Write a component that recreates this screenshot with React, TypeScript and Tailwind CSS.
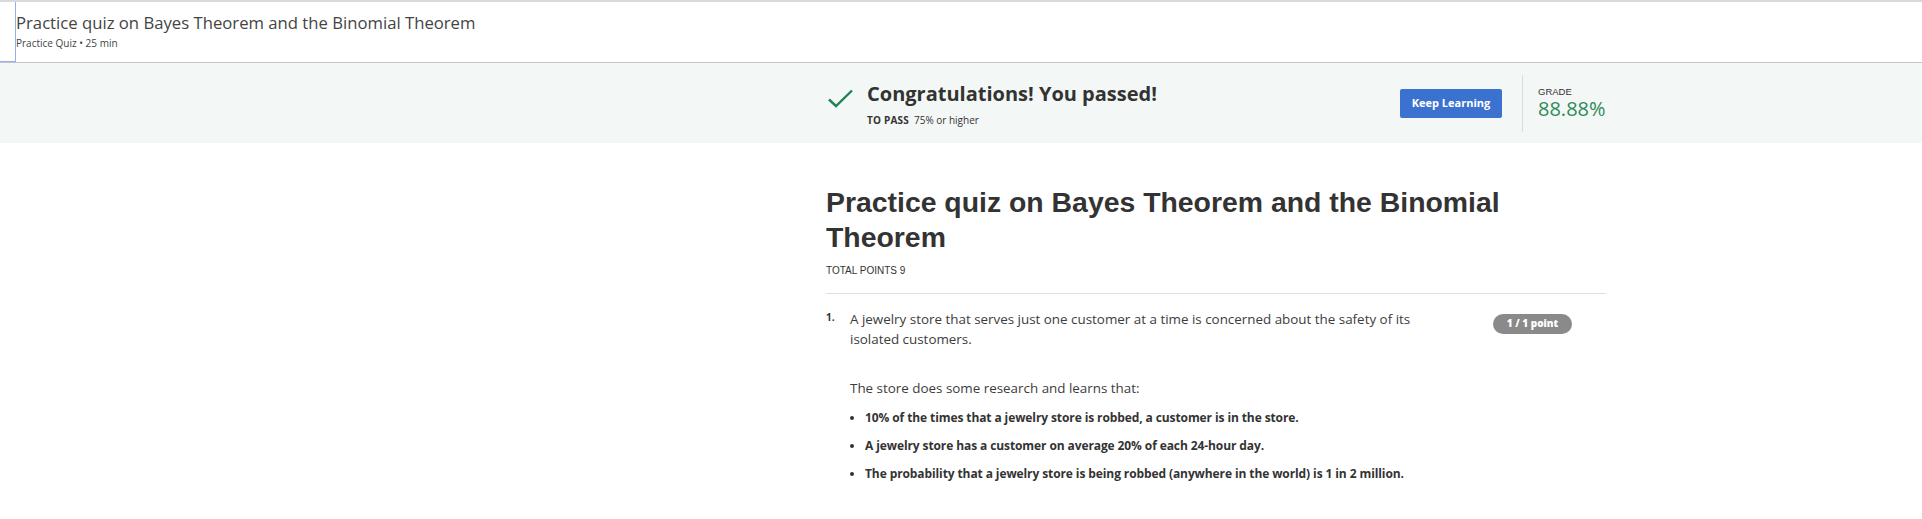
import React from "react";

const bullets = [
    "10% of the times that a jewelry store is robbed, a customer is in the store.",
    "A jewelry store has a customer on average 20% of each 24-hour day.",
    "The probability that a jewelry store is being robbed (anywhere in the world) is 1 in 2 million.",
];

const CheckIcon: React.FC = () => (
    <svg width="28" height="24" viewBox="0 0 28 24" className="shrink-0 mt-[5px]">
        <path d="M3 14.5 L10 21 L26 5.5" fill="none" stroke="#1f8354" strokeWidth="2.4" />
    </svg>
);

export default function App() {
    return (
        <div className="min-h-[519px] bg-white text-[#333] font-['Open_Sans',sans-serif]">
            {/* Top header */}
            <div className="flex h-[63px] border-t-2 border-b border-t-[#d9d9d9] border-b-[#c4c4c4]">
                <div className="w-[16px] shrink-0 border-r border-b border-[#8fb3ef]" />
                <div className="pt-[10px]">
                    <div className="text-[16.7px] leading-[22px] text-[#444]">
                        Practice quiz on Bayes Theorem and the Binomial Theorem
                    </div>
                    <div className="mt-[3px] text-[10px] leading-[13px] text-[#444]">Practice Quiz • 25 min</div>
                </div>
            </div>

            {/* Result banner */}
            <div className="h-[80px] bg-[#f3f8f6] flex">
                <div className="ml-[826px] w-[780px] flex items-center">
                    <div className="flex items-start">
                        <CheckIcon />
                        <div className="ml-[13px]">
                            <div className="text-[20px] leading-[28px] font-bold text-[#333]">
                                Congratulations! You passed!
                            </div>
                            <div className="mt-[5px] text-[10px] leading-[14px] text-[#333]">
                                <span className="font-bold tracking-[0.2px]">TO PASS</span>
                                <span className="ml-[5px]">75% or higher</span>
                            </div>
                        </div>
                    </div>
                    <div className="ml-auto flex items-center">
                        <button className="w-[102px] h-[29px] rounded-[2px] bg-[#3c72cf] text-white text-[11px] font-bold">
                            Keep Learning
                        </button>
                        <div className="ml-[20px] w-px h-[57px] bg-[#dcdcdc]" />
                        <div className="ml-[15px] w-[68px] font-['Liberation_Sans',Arial,sans-serif]">
                            <div className="text-[9.5px] leading-[12px] text-[#333]">GRADE</div>
                            <div className="text-[20px] leading-[22px] text-[#2f8a5a] font-['Open_Sans',sans-serif]">88.88%</div>
                        </div>
                    </div>
                </div>
            </div>

            {/* Quiz body */}
            <div className="flex">
                <div className="ml-[826px] w-[780px] pt-[42px]">
                    <h1 className="text-[28.4px] leading-[35px] font-bold text-[#333] font-['Liberation_Sans',Arial,sans-serif]">
                        Practice quiz on Bayes Theorem and the Binomial Theorem
                    </h1>
                    <div className="mt-[9px] text-[10px] leading-[14px] text-[#333] font-['Liberation_Sans',Arial,sans-serif]">
                        TOTAL POINTS 9
                    </div>
                    <div className="mt-[15px] border-t border-[#e0e0e0]" />

                    <div className="flex pt-[15px]">
                        <div className="w-[24px] shrink-0 text-[10px] leading-[16px] font-bold">1.</div>
                        <div className="w-[590px] text-[13.4px] leading-[20px] text-[#3c3c3c]">
                            <p>A jewelry store that serves just one customer at a time is concerned about the safety of its isolated customers.</p>
                            <p className="mt-[29px]">The store does some research and learns that:</p>
                            <ul className="mt-[10px] list-disc pl-[15px] flex flex-col gap-[8px]">
                                {bullets.map((b, i) => (
                                    <li key={i} className="text-[12px] leading-[20px] font-bold text-[#333] tracking-[-0.1px]">
                                        {b}
                                    </li>
                                ))}
                            </ul>
                        </div>
                        <div className="ml-auto mr-[34px] shrink-0">
                            <span className="inline-flex items-center justify-center w-[79px] h-[20px] rounded-full bg-[#8a8a8a] text-white text-[10px] font-extrabold">
                                1 / 1 point
                            </span>
                        </div>
                    </div>
                </div>
            </div>
        </div>
    );
}
